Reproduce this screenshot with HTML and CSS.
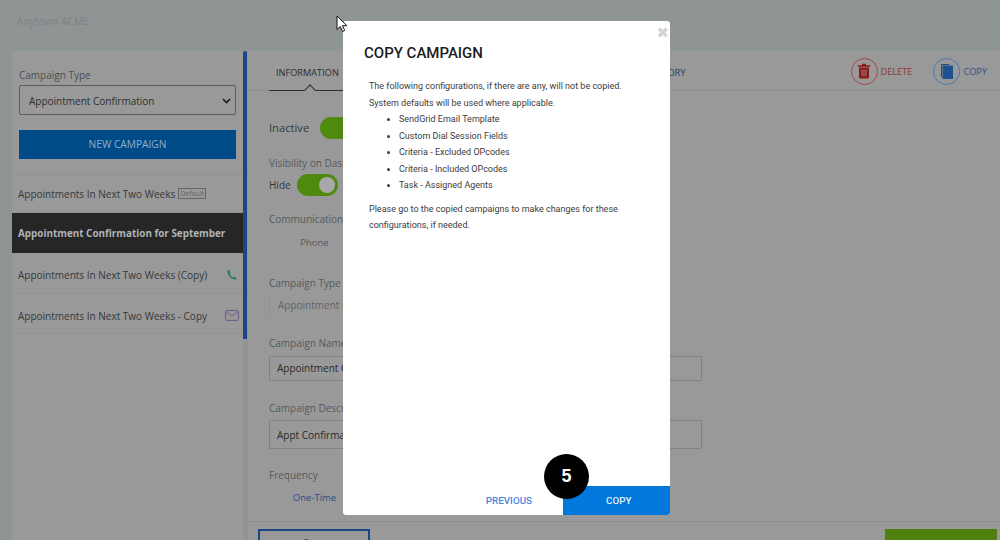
FILE: index.html
```html
<!DOCTYPE html>
<html lang="en">
<head>
<meta charset="utf-8">
<title>Copy Campaign</title>
<link rel="stylesheet" href="styles.css">
</head>
<body>
<div class="page">
  <header class="topbar">Anytown ACME</header>
  <div class="workspace">
    <aside class="sidebar">
      <div class="side-top">
        <div class="side-label">Campaign Type</div>
        <div class="select"><span>Appointment Confirmation</span>
          <svg class="chev" width="9" height="6" viewBox="0 0 9 6"><path d="M1 1l3.500 3.500L8 1" fill="none" stroke="#1c1c1c" stroke-width="1.600"/></svg>
        </div>
        <div class="new-btn">NEW CAMPAIGN</div>
      </div>
      <ul class="camp-list">
        <li class="camp r1"><span>Appointments In Next Two Weeks</span><em class="tag">Default</em></li>
        <li class="camp r2 active"><span>Appointment Confirmation for September</span></li>
        <li class="camp r3"><span>Appointments In Next Two Weeks (Copy)</span>
          <svg class="end-icon" width="11" height="12" viewBox="0 0 11 12"><path d="M1.600 1.200C.6 4.800 3.800 10 9.800 10.800l.6-1.900-2.400-1.300-1.100 1C5.300 8 3.900 6 3.500 4.300l1.200-.8L3.600 1z" fill="#2d7a5f"/></svg>
        </li>
        <li class="camp r4"><span>Appointments In Next Two Weeks - Copy</span>
          <svg class="end-icon mail" width="14" height="11" viewBox="0 0 14 11"><rect x=".6" y=".6" width="12.800" height="9.800" rx="1.200" fill="none" stroke="#6c5a8e" stroke-width="1"/><path d="M1 1.500l6 4.500 6-4.500" fill="none" stroke="#6c5a8e"/></svg>
        </li>
      </ul>
    </aside>
    <div class="divider"></div>
    <main class="main">
      <nav class="tabs">
        <div class="tab-info">INFORMATION</div>
        <div class="tab-hist">HISTORY</div>
        <div class="actions">
          <div class="act del">
            <span class="circle"><svg width="14" height="16" viewBox="0 0 14 16"><path d="M5 1.500h4M.8 3h12.400" stroke="#8d1616" stroke-width="1.600" fill="none"/><path d="M2 4.500h10v9.500a1.500 1.500 0 0 1-1.500 1.500h-7A1.500 1.500 0 0 1 2 14z" fill="#8d1616"/><path d="M5 6.500v6.500M7 6.500v6.500M9 6.500v6.500" stroke="#999" stroke-width=".8"/></svg></span>DELETE</div>
          <div class="act cop">
            <span class="circle"><svg width="12" height="15" viewBox="0 0 12 15"><path d="M0 0h8v1H1v12H0z" fill="#1d4d88"/><rect x="1.500" y="1.500" width="10.500" height="13.500" fill="#1d528f"/></svg></span>COPY</div>
        </div>
      </nav>
      <div class="form">
        <div class="status-row"><span class="status">Inactive</span><span class="toggle big"></span></div>
        <div class="lbl vis">Visibility on Dashboard</div>
        <div class="hide-row"><span>Hide</span><span class="toggle"><i></i></span></div>
        <div class="lbl comm">Communication</div>
        <div class="choice">Phone</div>
        <div class="lbl ctype">Campaign Type</div>
        <div class="ro-input">Appointment Confirmation</div>
        <div class="lbl cname">Campaign Name</div>
        <div class="input h1">Appointment Confirmation for September</div>
        <div class="lbl cdesc">Campaign Description</div>
        <div class="input h2">Appt Confirmation</div>
        <div class="lbl freq">Frequency</div>
        <div class="choice link">One-Time</div>
      </div>
      <footer class="foot">
        <div class="btn-outline">Save</div>
        <div class="btn-green"></div>
      </footer>
    </main>
  </div>
</div>

<section class="modal">
  <span class="close">✖</span>
  <h2 class="modal-title">COPY CAMPAIGN</h2>
  <div class="modal-body">
    <p>The following configurations, if there are any, will not be copied.<br>System defaults will be used where applicable.</p>
    <ul>
      <li>SendGrid Email Template</li>
      <li>Custom Dial Session Fields</li>
      <li>Criteria - Excluded OPcodes</li>
      <li>Criteria - Included OPcodes</li>
      <li>Task - Assigned Agents</li>
    </ul>
    <p>Please go to the copied campaigns to make changes for these<br>configurations, if needed.</p>
  </div>
  <div class="modal-foot">
    <div class="prev">PREVIOUS</div>
    <div class="copy-btn">COPY</div>
  </div>
</section>
<div class="step">5</div>
<svg class="cursor" width="12" height="18" viewBox="0 0 12 18"><path d="M1 1v13.500l3.300-3 2.200 5 2.200-1-2.200-4.800h4.400z" fill="#fff" stroke="#111" stroke-width="1"/></svg>
</body>
</html>
```
FILE: styles.css
```css
* { box-sizing: border-box; }
html, body { margin: 0; height: 540px; overflow: hidden; }
body { background: #999; font-family: "Open Sans", "Liberation Sans", sans-serif; color: #3c3c3c; }
ul { list-style: none; margin: 0; padding: 0; }

.page { height: 540px; display: flex; flex-direction: column; background: #8f9595; }
.topbar { height: 51px; flex: none; padding: 13px 0 0 17px; font-size: 10.200px; line-height: 16px; color: #7d8282; }
.workspace { flex: 1; display: flex; padding-left: 12px; min-height: 0; }

.sidebar { width: 231px; flex: none; background: #999; }
.side-top { padding: 17px 7px 0 7px; height: 124px; border-bottom: 1px solid #929292; }
.side-label { font-size: 10px; line-height: 14px; color: #4a4e52; margin-bottom: 3px; }
.select { height: 30px; width: 217px; border: 1px solid #5c5c5c; border-radius: 2px; display: flex; align-items: center; justify-content: space-between; padding: 1px 4px 0 9px; font-size: 10px; color: #2f2f2f; }
.new-btn { margin-top: 15px; width: 217px; height: 29px; background: #004a88; color: #8fb0cb; font-size: 10.200px; line-height: 29px; text-align: center; }

.camp { display: flex; align-items: center; padding: 0 4px 0 6px; font-size: 10px; color: #35383a; border-bottom: 1px solid #929292; white-space: nowrap; }
.camp span { flex: 1; }
.r1 { height: 38px; }
.r1 span { flex: none; }
.r2 { height: 40px; }
.r3 { height: 41px; padding-top: 3px; }
.r4 { height: 40px; padding-top: 4px; }
.active { background: #262626; color: #adb3b8; font-weight: 700; font-size: 9.900px; border-bottom: 0; }
.tag { margin-left: 3px; border: 1px solid #666; font-style: normal; font-size: 7px; line-height: 9px; padding: 0 1px; color: #666; }
.end-icon { margin-right: 2px; }
.mail { margin-right: 0; }

.divider { width: 4px; flex: none; height: 288px; background: #1b4586; border-radius: 2px 2px 0 0; }
.main { flex: 1; min-width: 0; background: #999; border-left: 1px solid #949494; display: flex; flex-direction: column; }

.tabs { height: 40px; flex: none; display: flex; border-bottom: 1px solid #8f8f8f; padding-left: 21px; }
.tab-info { position: relative; width: 85px; height: 40px; border-bottom: 1px solid #2e2e2e; font-size: 9.200px; line-height: 44px; color: #2d2d2d; white-space: nowrap; padding-left: 7px; }
.tab-info::after { content: ""; position: absolute; left: 37px; top: 35px; width: 7px; height: 7px; background: #999; border: solid #2e2e2e; border-width: 1px 0 0 1px; transform: rotate(45deg); }
.tab-hist { margin-left: 294px; font-size: 9.200px; line-height: 44px; color: #243f6f; }
.actions { margin-left: auto; display: flex; gap: 21px; padding: 6px 13px 0 0; }
.act { display: flex; align-items: center; height: 28px; gap: 3px; font-size: 9.200px; }
.circle { width: 27px; height: 27px; border-radius: 50%; border: 1px solid; display: flex; align-items: center; justify-content: center; }
.del { color: #8b3a3a; }
.cop { color: #2f5287; }
.del .circle { border-color: #a04848; }
.cop .circle { border-color: #4a76ad; }

.form { flex: 1; padding: 0 0 0 21px; min-height: 0; }
.status-row { display: flex; align-items: center; margin-top: 25px; gap: 11px; height: 23px; }
.status { font-size: 11.200px; color: #35383a; }
.toggle { width: 41px; height: 22px; border-radius: 11px; background: #4f8a10; display: flex; justify-content: flex-end; align-items: center; padding-right: 3px; }
.toggle i { width: 16px; height: 16px; border-radius: 50%; background: #a8a8a8; }
.big { width: 60px; }
.lbl { font-size: 10px; line-height: 14px; color: #55595c; white-space: nowrap; }
.vis { margin-top: 17px; }
.hide-row { display: flex; align-items: center; gap: 6px; margin-top: 3px; height: 23px; font-size: 10px; color: #35383a; }
.comm { margin-top: 16px; }
.choice { width: 91px; text-align: center; font-size: 9.500px; line-height: 14px; margin-top: 10px; color: #55595c; }
.link { color: #2d4d8c; margin-top: 9px; }
.ctype { margin-top: 26px; }
.ro-input { margin-top: 2px; height: 26px; width: 432px; font-size: 10px; line-height: 26px; padding-left: 8px; color: #5f6366; border-left: 1px solid #929292; white-space: nowrap; }
.cname { margin-top: 18px; }
.input { margin-top: 6px; width: 433px; border: 1px solid #7c8487; font-size: 10px; padding-left: 7px; color: #26292c; border-radius: 1px; white-space: nowrap; }
.h1 { height: 25px; line-height: 23px; }
.h2 { height: 29px; line-height: 28px; margin-top: 5px; }
.cdesc { margin-top: 20px; }
.freq { margin-top: 19px; }

.foot { height: 19px; flex: none; border-top: 1px solid #8f8f8f; padding: 7px 3px 0 10px; display: flex; justify-content: space-between; overflow: hidden; }
.btn-outline { width: 112px; height: 30px; border: 2px solid #1b4586; font-size: 10px; line-height: 24px; text-align: center; color: #1b4586; }
.btn-green { width: 112px; height: 30px; background: #4f8110; }

.modal { position: absolute; left: 343px; top: 21px; width: 327px; height: 494px; background: #fff; border-radius: 3px; display: flex; flex-direction: column; font-family: Roboto, "Liberation Sans", sans-serif; }
.close { position: absolute; right: 1px; top: 3px; font-size: 15px; line-height: 18px; color: #d3d3d3; font-family: "DejaVu Sans", sans-serif; }
.modal-title { margin: 23px 0 0 21px; font-size: 15px; line-height: 18px; font-weight: 500; color: #1c1c1c; }
.modal-body { flex: 1; padding: 16px 0 0 26px; font-size: 9px; line-height: 16.500px; color: #3c3c3c; }
.modal-body p { margin: 0; }
.modal-body ul { list-style: disc; padding-left: 30px; margin: 0 0 7px; }
.modal-foot { height: 29px; display: flex; flex: none; }
.prev { width: 220px; font-size: 9.800px; font-weight: 500; line-height: 29px; text-align: right; padding-right: 31px; color: #4a86d8; }
.copy-btn { flex: 1; background: #0078dc; border-radius: 0 0 3px 0; color: #e3f0fb; font-size: 9.800px; font-weight: 500; line-height: 29px; padding-left: 43px; }

.step { position: absolute; left: 544px; top: 454px; width: 45px; height: 45px; border-radius: 50%; background: #000; color: #fff; font: 700 18px/45px "Liberation Sans", sans-serif; text-align: center; }
.cursor { position: absolute; left: 336px; top: 15px; }
```
